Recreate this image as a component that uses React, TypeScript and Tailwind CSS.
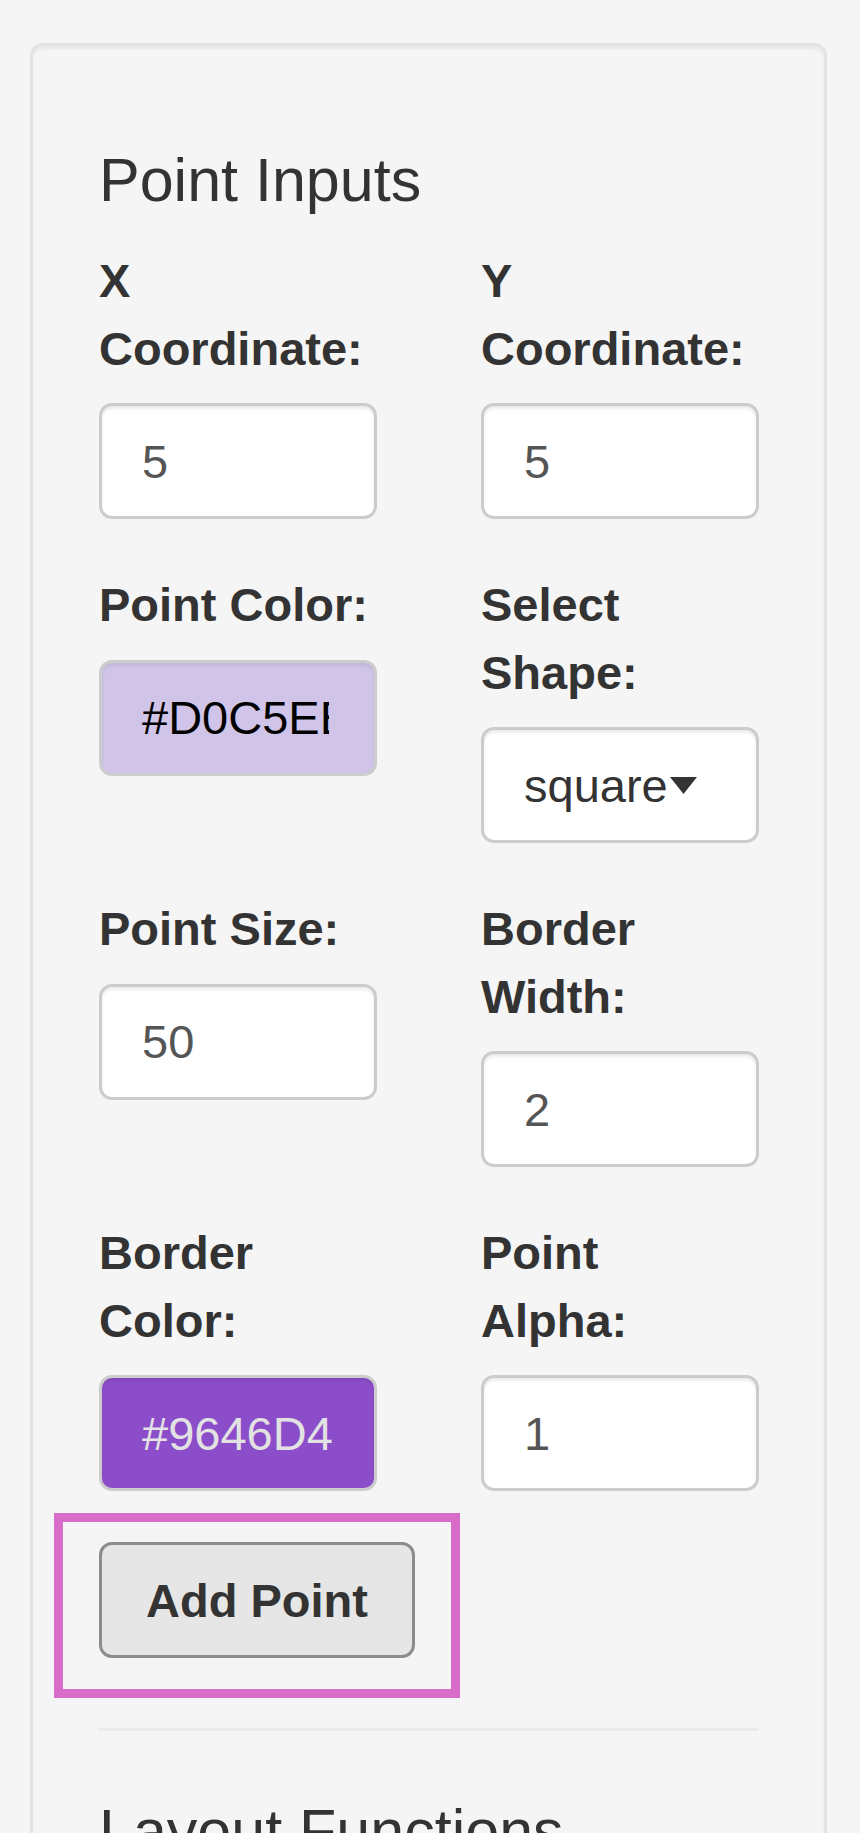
import type { ReactNode } from "react";

const labelCls = "block whitespace-nowrap text-[47px] font-bold leading-[67.5px] text-[#333333] mb-[21px]";
const boxCls =
	"h-[116px] w-full rounded-[13px] border-[3px] border-[#cccccc] shadow-[inset_0_3px_3px_rgba(0,0,0,0.075)] pl-[40px] flex items-center text-[47px] leading-none";

function Field({ label, children }: { label: ReactNode; children: ReactNode }) {
	return (
		<div>
			<label className={labelCls}>{label}</label>
			{children}
		</div>
	);
}

function TextBox({ value }: { value: string }) {
	return (
		<div className={`${boxCls} pr-[40px] bg-white text-[#555555]`}>
			<span className="flex-1 overflow-hidden whitespace-nowrap">{value}</span>
		</div>
	);
}

// colour picker input: the value is clipped at the content edge
function ColorBox({ value, cls }: { value: string; cls: string }) {
	return (
		<div className={`${boxCls} ${cls}`}>
			<span className="flex-1 overflow-hidden whitespace-nowrap">{value}</span>
		</div>
	);
}

export default function App() {
	return (
		<div className="min-h-screen bg-[#f5f5f5] pt-[43px] pl-[30px] pr-[33px] font-['Liberation_Sans',Arial,sans-serif]">
			<div className="rounded-[13px] border-[3px] border-[#e3e3e3] bg-[#f5f5f5] shadow-[inset_0_3px_3px_rgba(0,0,0,0.05)] pl-[66px] pr-[65px] pt-[101px] pb-[300px]">
				<h4 className="text-[61px] font-normal leading-[67px] text-[#333333] mb-[33px]">Point Inputs</h4>

				<div className="grid grid-cols-2 gap-x-[104px] gap-y-[52px] items-start">
					<Field label={<>X<br />Coordinate:</>}>
						<TextBox value="5" />
					</Field>
					<Field label={<>Y<br />Coordinate:</>}>
						<TextBox value="5" />
					</Field>

					<Field label="Point Color:">
						<ColorBox value="#D0C5EB" cls="pr-[45px] bg-[#d0c5e9] text-black" />
					</Field>
					<Field label={<>Select<br />Shape:</>}>
						<div className={`${boxCls} pr-[40px] relative bg-white text-[#333333]`}>
							<span className="whitespace-nowrap">square</span>
							{/* selectize caret */}
							<svg className="absolute left-[186px] top-[47px]" width="27" height="17" viewBox="0 0 27 17">
								<polygon points="0,0 27,0 13.5,17" fill="#333333" />
							</svg>
						</div>
					</Field>

					<Field label="Point Size:">
						<TextBox value="50" />
					</Field>
					<Field label={<>Border<br />Width:</>}>
						<TextBox value="2" />
					</Field>

					<Field label={<>Border<br />Color:</>}>
						<ColorBox value="#9646D4" cls="pr-[38px] bg-[#8c4dca] text-[#e2e2e2]" />
					</Field>
					<Field label={<>Point<br />Alpha:</>}>
						<TextBox value="1" />
					</Field>
				</div>

				<div className="mt-[51px]">
					<div className="relative inline-block">
						<button
							type="button"
							className="h-[116px] w-[316px] rounded-[13px] border-[3px] border-[#8c8c8c] bg-[#e6e6e6] text-[47px] font-bold leading-none text-[#333333]"
						>
							Add Point
						</button>
						{/* highlight frame */}
						<div className="pointer-events-none absolute -left-[45px] -right-[45px] -top-[29px] -bottom-[40px] border-[9px] border-[#d76dc9]" />
					</div>
				</div>

				<hr className="mt-[70px] border-0 border-t-[3px] border-[#ebebeb]" />

				<h4 className="mt-[67px] text-[61px] font-normal leading-[67px] text-[#333333]">Layout Functions</h4>
			</div>
		</div>
	);
}
